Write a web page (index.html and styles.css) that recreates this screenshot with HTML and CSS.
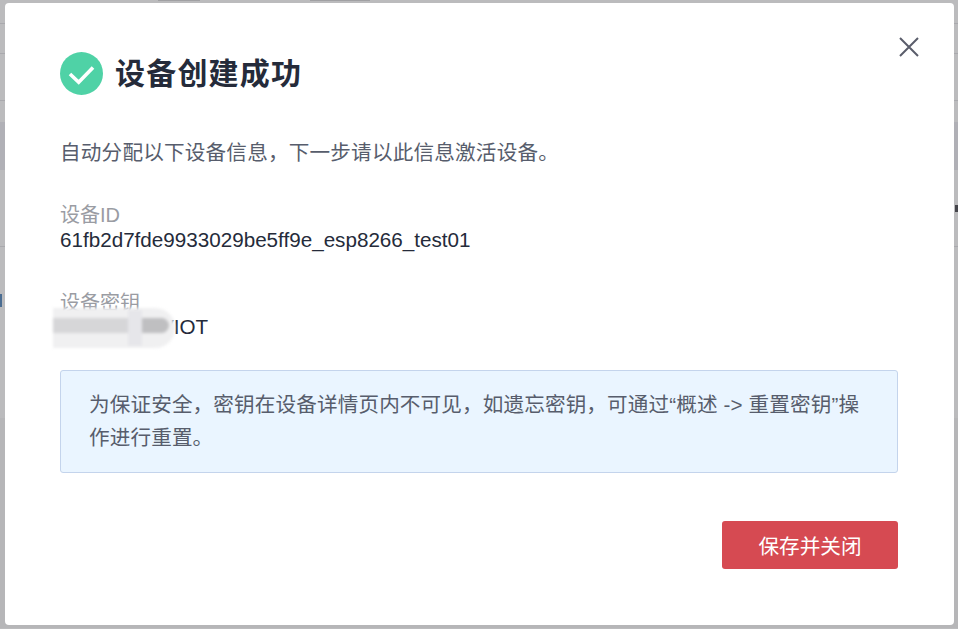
FILE: index.html
```html
<!DOCTYPE html>
<html lang="zh">
<head>
<meta charset="utf-8">
<title>设备创建成功</title>
<link rel="stylesheet" href="styles.css">
</head>
<body>
<div class="backdrop">
  <div class="bg-line l1"></div>
  <div class="bg-line l2"></div>
  <div class="bg-line l3"></div>
  <div class="bg-line l4"></div>
  <div class="bg-line l5"></div>
  <div class="bg-line l6"></div>
  <div class="bg-mark m1"></div>
  <div class="bg-mark m2"></div>
  <div class="bg-mark m3"></div>
  <div class="bg-mark m4"></div>
  <section class="modal">
    <button class="close" aria-label="关闭">
      <svg width="20" height="20" viewBox="0 0 20 20"><path d="M1 1L19 19M19 1L1 19" fill="none" stroke="#5a5d6b" stroke-width="2"/></svg>
    </button>
    <header class="head">
      <svg class="ok" width="43" height="43" viewBox="0 0 43 43"><circle cx="21.5" cy="21.5" r="21.5" fill="#4fd2a6"/><path d="M10 22L18.7 30.2L33 15.5" fill="none" stroke="#fff" stroke-width="3.6"/></svg>
      <h1 class="title">设备创建成功</h1>
    </header>
    <p class="intro">自动分配以下设备信息，下一步请以此信息激活设备。</p>
    <div class="field first">
      <div class="label">设备ID</div>
      <div class="value">61fb2d7fde9933029be5ff9e_esp8266_test01</div>
    </div>
    <div class="field second">
      <div class="label">设备密钥</div>
      <div class="value masked">VIOT
        <div class="smear"><i class="s1"></i><i class="s2"></i><i class="s4"></i><i class="s3"></i></div>
      </div>
    </div>
    <div class="notice">为保证安全，密钥在设备详情页内不可见，如遗忘密钥，可通过“概述 -&gt; 重置密钥”操作进行重置。</div>
    <footer class="foot"><button class="primary">保存并关闭</button></footer>
  </section>
</div>
</body>
</html>
```
FILE: styles.css
```css
* { box-sizing: border-box; }
html, body { margin: 0; height: 100%; overflow: hidden; }
body { font-family: "Liberation Sans", "Noto Sans CJK SC", sans-serif; }
.backdrop { position: relative; width: 958px; height: 629px; background: #bbbbbd; padding: 3px 4px 4px 5px; }
.bg-line { position: absolute; height: 1px; background: #a9a9ad; left: 0; width: 958px; }
.l1 { top: 23px; }
.l2 { top: 53px; }
.l3 { top: 100px; }
.l4 { top: 122px; height: 48px; background: #b0b0b6; }
.l5 { top: 246px; }
.l6 { top: 418px; height: 210px; background: #b6b6b8; }
.bg-mark { position: absolute; }
.m1 { left: 955px; top: 205px; width: 3px; height: 7px; background: #45454b; }
.m2 { left: 0; top: 294px; width: 2px; height: 13px; background: #4b6d92; }
.m3 { left: 158px; top: 0; width: 42px; height: 1px; background: #a0a0a3; }
.m4 { left: 310px; top: 0; width: 60px; height: 1px; background: #a0a0a3; }
.modal { position: relative; z-index: 1; width: 949px; height: 622px; background: #fff; border-radius: 4px; padding: 49px 56px 0 55px; display: flex; flex-direction: column; }
.close { position: absolute; top: 34px; right: 35px; padding: 0; border: 0; background: none; width: 20px; height: 20px; display: flex; }
.head { display: flex; align-items: center; gap: 12px; height: 43px; }
.ok { flex: none; }
.title { margin: 0; font-size: 30px; line-height: 43px; font-weight: 700; color: #252b3a; letter-spacing: 1.2px; }
.intro { margin: 44px 0 0; font-size: 20.6px; line-height: 28px; color: #575d6c; letter-spacing: 0.2px; }
.field { display: flex; flex-direction: column; }
.first { margin-top: 36px; }
.second { margin-top: 40px; }
.label { font-size: 20px; line-height: 24px; color: #9a9ca3; }
.second .label { line-height: 22px; }
.value { font-size: 20.65px; line-height: 25px; color: #252b3a; }
.masked { position: relative; padding-left: 100px; height: 25px; }
.smear { position: absolute; left: -7px; top: -6px; width: 122px; height: 40px; filter: blur(1.5px); overflow: hidden; }
.smear i { position: absolute; display: block; }
.s1 { left: 0; top: 0; width: 122px; height: 40px; background: #f0f0f1; border-radius: 0 20px 20px 0; }
.s2 { left: 0; top: 10px; width: 89px; height: 15px; background: #d6d6d8; }
.s4 { left: 89px; top: 10px; width: 27px; height: 15px; background: #bfbfc1; border-radius: 0 8px 8px 0; }
.s3 { left: 75px; top: 2px; width: 14px; height: 36px; background: #e6e6ea; }
.notice { margin-top: 31px; height: 103px; width: 838px; padding: 17px 28px; border: 1px solid #c4d4ec; border-radius: 3px; background: #eaf5ff; color: #575d6c; font-size: 20.6px; line-height: 33px; letter-spacing: 0.13px; }
.foot { display: flex; justify-content: flex-end; margin-top: 48px; width: 838px; }
.primary { width: 176px; height: 48px; border: 0; border-radius: 3px; background: #d64a52; color: #fff; font-family: inherit; font-size: 20.6px; padding: 0; }
```
